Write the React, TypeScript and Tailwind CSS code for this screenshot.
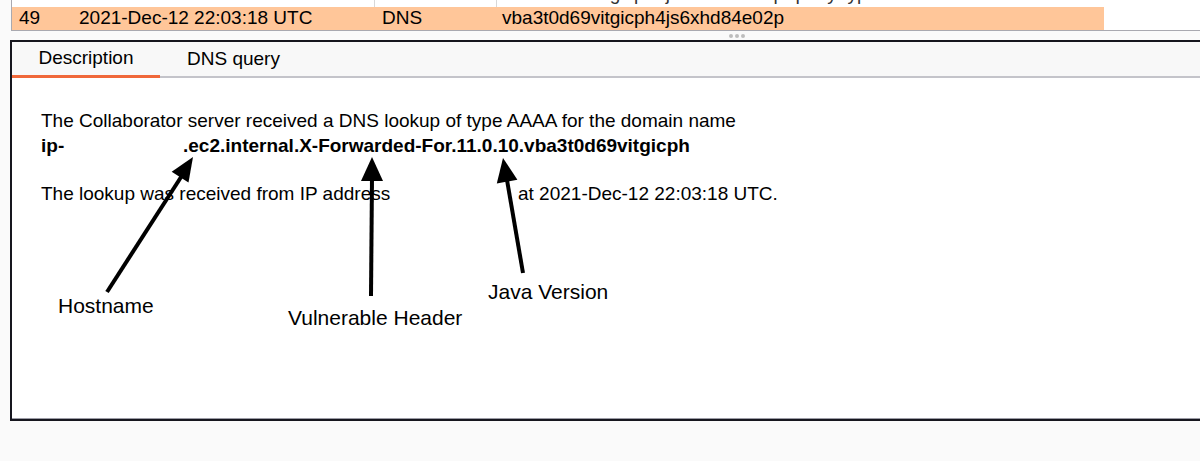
import React from 'react'

const font = { fontFamily: '"Liberation Sans", Arial, sans-serif' }

function Arrows() {
  return (
    <svg className="pointer-events-none absolute top-0 left-0" width="1200" height="461">
      <g stroke="#000" strokeWidth="4" strokeLinecap="butt">
        <line x1="107" y1="292" x2="183" y2="174" />
        <line x1="371" y1="296" x2="372" y2="178" />
        <line x1="523" y1="273" x2="507" y2="180" />
      </g>
      <g fill="#000">
        <polygon points="193,157 188.5,182.6 171.7,171.8" />
        <polygon points="372,157 383,181 361,181" />
        <polygon points="503,158 517.4,179.8 496.8,183.4" />
      </g>
    </svg>
  )
}

export default function App() {
  return (
    <div className="relative h-[461px] w-[1200px] overflow-hidden bg-[#fafafa] text-black" style={font}>
      {/* result table, last visible rows */}
      <div className="ml-[11px] border-b border-l border-[#a9a9b0] bg-white">
        <div className="h-[7px] overflow-hidden">
          <div className="-mt-[18px] flex h-[25px] items-center text-[19px] text-[#333]">
            <span className="w-[67px] pl-[7px]">48</span>
            <span className="w-[296px] border-r border-[#d8d8d8]">2021-Dec-12 22:03:14 UTC</span>
            <span className="w-[122px] border-r border-[#d8d8d8] pl-[7px]">DNS</span>
            <span className="pl-[5px]">vba3t0d69vitgicph4js6xhd84e02p query type</span>
          </div>
        </div>
        <div className="flex h-[23px] w-[1092px] items-center bg-[#ffc699] text-[19px]">
          <span className="w-[67px] pl-[7px]">49</span>
          <span className="w-[303px]">2021-Dec-12 22:03:18 UTC</span>
          <span className="w-[120px]">DNS</span>
          <span>vba3t0d69vitgicph4js6xhd84e02p</span>
        </div>
      </div>

      {/* splitter */}
      <div className="flex h-[9px] items-center gap-[2px] pl-[729px]">
        <span className="h-[4px] w-[4px] rounded-full bg-[#bdbdbd]" />
        <span className="h-[4px] w-[4px] rounded-full bg-[#bdbdbd]" />
        <span className="h-[4px] w-[4px] rounded-full bg-[#bdbdbd]" />
      </div>

      {/* detail panel */}
      <div className="ml-[10px] w-[1210px] border-y-2 border-l-2 border-[#16161e]">
        <div className="flex h-[36px] border-b-2 border-[#c4c4ca] bg-[#f8f8f8] text-[19px]">
          <div className="-mb-[2px] flex w-[148px] items-center justify-center border-b-[3px] border-[#f0683a]">
            Description
          </div>
          <div className="flex items-center pl-[27px]">DNS query</div>
        </div>
        <div className="h-[341px] border-b border-[#9c9ca6] bg-white pt-[30px] pl-[29px] text-[19px] leading-[25px]">
          <p>The Collaborator server received a DNS lookup of type AAAA for the domain name</p>
          <p className="flex font-bold">
            <span className="w-[142px]">ip-</span>
            <span>.ec2.internal.X-Forwarded-For.11.0.10.vba3t0d69vitgicph</span>
          </p>
          <p className="mt-[23px] flex">
            <span className="w-[477px]">The lookup was received from IP address</span>
            <span>at 2021-Dec-12 22:03:18 UTC.</span>
          </p>
        </div>
      </div>

      <Arrows />
      <span className="absolute top-[293px] left-[58px] text-[21px] leading-[26px]">Hostname</span>
      <span className="absolute top-[305px] left-[288px] text-[21px] leading-[26px]">Vulnerable Header</span>
      <span className="absolute top-[279px] left-[488px] text-[21px] leading-[26px]">Java Version</span>
    </div>
  )
}
